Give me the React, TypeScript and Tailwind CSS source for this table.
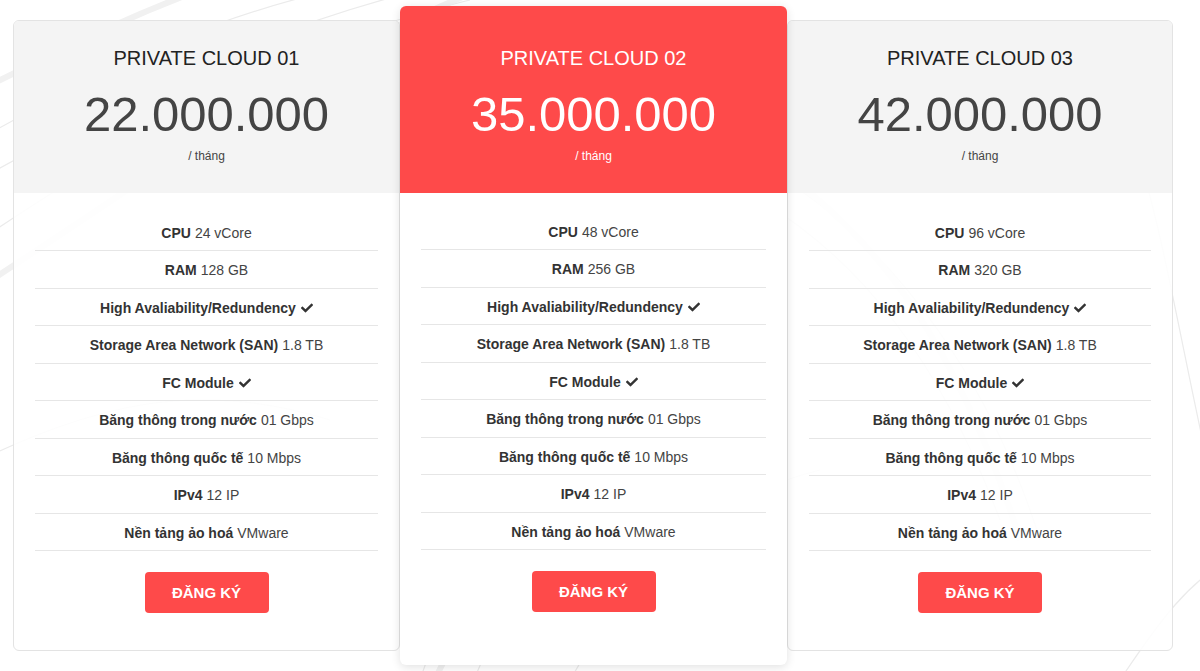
import { FaCheck } from "react-icons/fa";

interface Feature {
  label: string;
  value?: string;
  check?: boolean;
}

interface Plan {
  name: string;
  price: string;
  featured?: boolean;
  features: Feature[];
}

const makeFeatures = (cpu: string, ram: string): Feature[] => [
  { label: "CPU", value: cpu },
  { label: "RAM", value: ram },
  { label: "High Avaliability/Redundency", check: true },
  { label: "Storage Area Network (SAN)", value: "1.8 TB" },
  { label: "FC Module", check: true },
  { label: "Băng thông trong nước", value: "01 Gbps" },
  { label: "Băng thông quốc tế", value: "10 Mbps" },
  { label: "IPv4", value: "12 IP" },
  { label: "Nền tảng ảo hoá", value: "VMware" },
];

const plans: Plan[] = [
  { name: "PRIVATE CLOUD 01", price: "22.000.000", features: makeFeatures("24 vCore", "128 GB") },
  { name: "PRIVATE CLOUD 02", price: "35.000.000", featured: true, features: makeFeatures("48 vCore", "256 GB") },
  { name: "PRIVATE CLOUD 03", price: "42.000.000", features: makeFeatures("96 vCore", "320 GB") },
];

const Swirls = () => (
  <svg
    className="absolute inset-0 w-full h-full pointer-events-none"
    viewBox="0 0 1200 671"
    preserveAspectRatio="none"
    fill="none"
  >
    <g stroke="#ebebeb" strokeWidth="1.2">
      <path d="M-40 150 C 120 60, 220 10, 380 -20" />
      <path d="M-40 190 C 140 90, 260 30, 420 -10" />
      <path d="M-20 240 C 160 120, 300 40, 470 0" />
      <path d="M-40 470 C 100 400, 200 380, 330 420" />
      <path d="M420 680 C 460 560, 520 460, 640 400" />
      <path d="M470 690 C 520 560, 600 470, 720 420" />
      <path d="M560 700 C 620 580, 700 500, 820 470" />
      <path d="M760 200 C 860 260, 940 360, 1000 520" />
      <path d="M800 190 C 900 260, 990 380, 1040 540" />
      <path d="M1140 160 C 1170 260, 1190 400, 1230 560" />
      <path d="M1120 680 C 1160 620, 1190 580, 1230 560" />
    </g>
    <g stroke="#f1f1f1" strokeWidth="6">
      <path d="M-40 300 C 150 180, 300 60, 480 -10" />
      <path d="M-60 110 C 80 40, 160 0, 260 -30" />
      <path d="M430 690 C 490 560, 560 470, 690 410" />
      <path d="M780 170 C 880 240, 960 350, 1020 540" />
    </g>
  </svg>
);

const PlanCard = ({ plan }: { plan: Plan }) => {
  const featured = plan.featured;
  return (
    <div
      className={
        featured
          ? "relative z-10 flex flex-col bg-white rounded-md overflow-hidden shadow-[0_2px_10px_rgba(0,0,0,0.12)]"
          : "relative flex flex-col bg-white/90 border border-[#e3e3e3] rounded-md overflow-hidden mt-[14px] self-start"
      }
    >
      <div
        className={
          featured
            ? "flex flex-col items-center bg-[#fe4a4a] text-white pt-[40px] pb-[29px]"
            : "flex flex-col items-center bg-[#f4f4f4] pt-[25px] pb-[29px]"
        }
      >
        <h3 className={featured ? "text-[20px] leading-[24px] text-white" : "text-[20px] leading-[24px] text-[#222]"}>
          {plan.name}
        </h3>
        <div
          className={
            featured
              ? "mt-[19px] text-[49px] leading-[50px] text-white"
              : "mt-[19px] text-[49px] leading-[50px] text-[#444]"
          }
        >
          {plan.price}
        </div>
        <div className={featured ? "mt-[9px] text-[12px] leading-[16px] text-white" : "mt-[9px] text-[12px] leading-[16px] text-[#444]"}>
          / tháng
        </div>
      </div>

      <ul className={featured ? "px-[21px] pt-[19.5px]" : "px-[21px] pt-[20.5px]"}>
        {plan.features.map((f, i) => (
          <li
            key={i}
            className="flex items-center justify-center gap-[4px] border-b border-[#e6e6e6] pt-[11px] pb-[9px] text-[14px] leading-[16.5px] text-[#444]"
          >
            <span className="font-bold text-[#333]">{f.label}</span>
            {f.value && <span>{f.value}</span>}
            {f.check && <FaCheck className="text-[#333] w-[12px] h-[12px] ml-[1px]" />}
          </li>
        ))}
      </ul>

      <div className={featured ? "flex justify-center pt-[21px] pb-[53px]" : "flex justify-center pt-[21px] pb-[37px]"}>
        <button className="w-[124px] h-[41px] rounded-[4px] bg-[#fe4a4a] text-white font-bold text-[15px] pt-[1px]">
          ĐĂNG KÝ
        </button>
      </div>
    </div>
  );
};

export default function App() {
  return (
    <div
      className="relative w-[1200px] h-[671px] bg-white overflow-hidden"
      style={{ fontFamily: '"Liberation Sans", Arial, Helvetica, sans-serif' }}
    >
      <Swirls />
      <div className="relative grid grid-cols-[387px_387px_386px] items-start pl-[13px] pt-[6px]">
        {plans.map((p) => (
          <PlanCard key={p.name} plan={p} />
        ))}
      </div>
    </div>
  );
}
